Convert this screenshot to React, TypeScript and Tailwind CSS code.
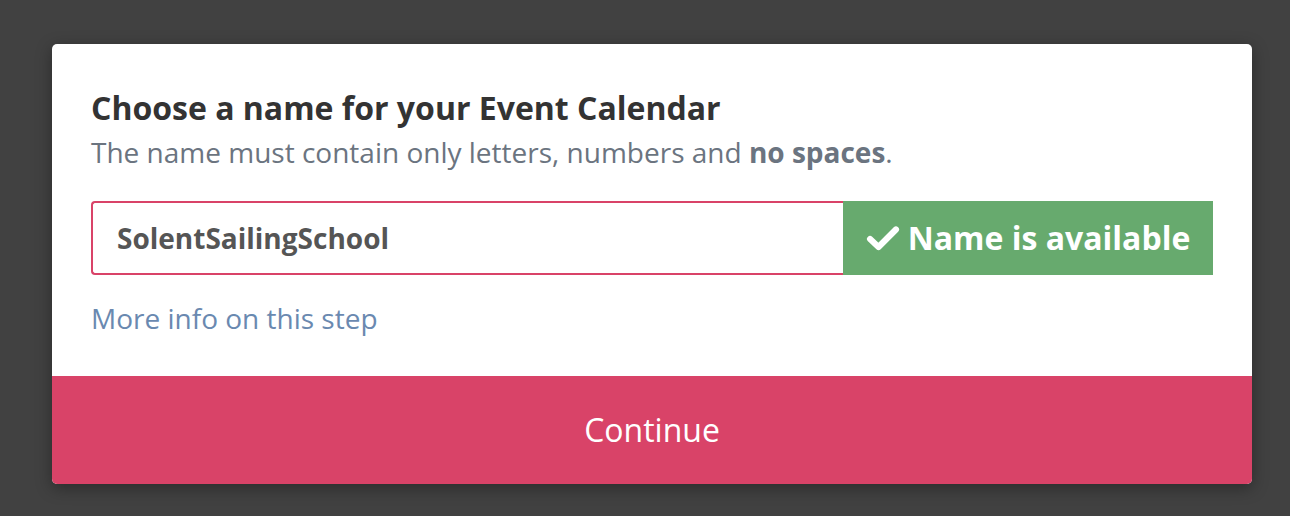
import React from 'react';

const App: React.FC = () => {
  return (
    <div
      className="w-full h-[516px] bg-[#414141] pt-[44px] px-[52px]"
      style={{ fontFamily: '"Open Sans", sans-serif' }}
    >
      <div className="w-[1200px] bg-white rounded-[5px] overflow-hidden shadow-[0_4px_16px_rgba(0,0,0,0.35)]">
        <div className="px-[39px] pt-[44px] pb-[39px]">
          <h1 className="text-[32px] leading-[40px] font-bold text-[#333333]">
            Choose a name for your Event Calendar
          </h1>
          <p className="mt-[6px] text-[28px] leading-[36px] text-[#6b7480]">
            The name must contain only letters, numbers and <span className="font-bold">no spaces</span>.
          </p>
          <div className="mt-[31px] flex h-[74px]">
            <div className="flex-1 flex items-center border-2 border-r-0 border-[#d94368] rounded-l-[4px] pl-[24px]">
              <input
                readOnly
                value="SolentSailingSchool"
                className="w-full outline-none text-[28px] font-bold text-[#555555] bg-transparent"
                style={{ fontFamily: '"Open Sans", sans-serif' }}
              />
            </div>
            <div className="w-[370px] bg-[#67aa6e] flex items-center justify-center gap-[8px] text-white">
              <svg width="34" height="27" viewBox="0 0 30 24" fill="none">
                <path d="M3.5 12.5 L11 19.5 L26.5 4" stroke="white" strokeWidth="5.5" strokeLinecap="round" strokeLinejoin="round" />
              </svg>
              <span className="text-[32px] font-bold">Name is available</span>
            </div>
          </div>
          <a href="#" className="block mt-[24px] text-[28px] leading-[38px] text-[#6a89b0]">
            More info on this step
          </a>
        </div>
        <button className="w-full h-[108px] bg-[#d94368] text-white text-[32px]">
          Continue
        </button>
      </div>
    </div>
  );
};

export default App;
